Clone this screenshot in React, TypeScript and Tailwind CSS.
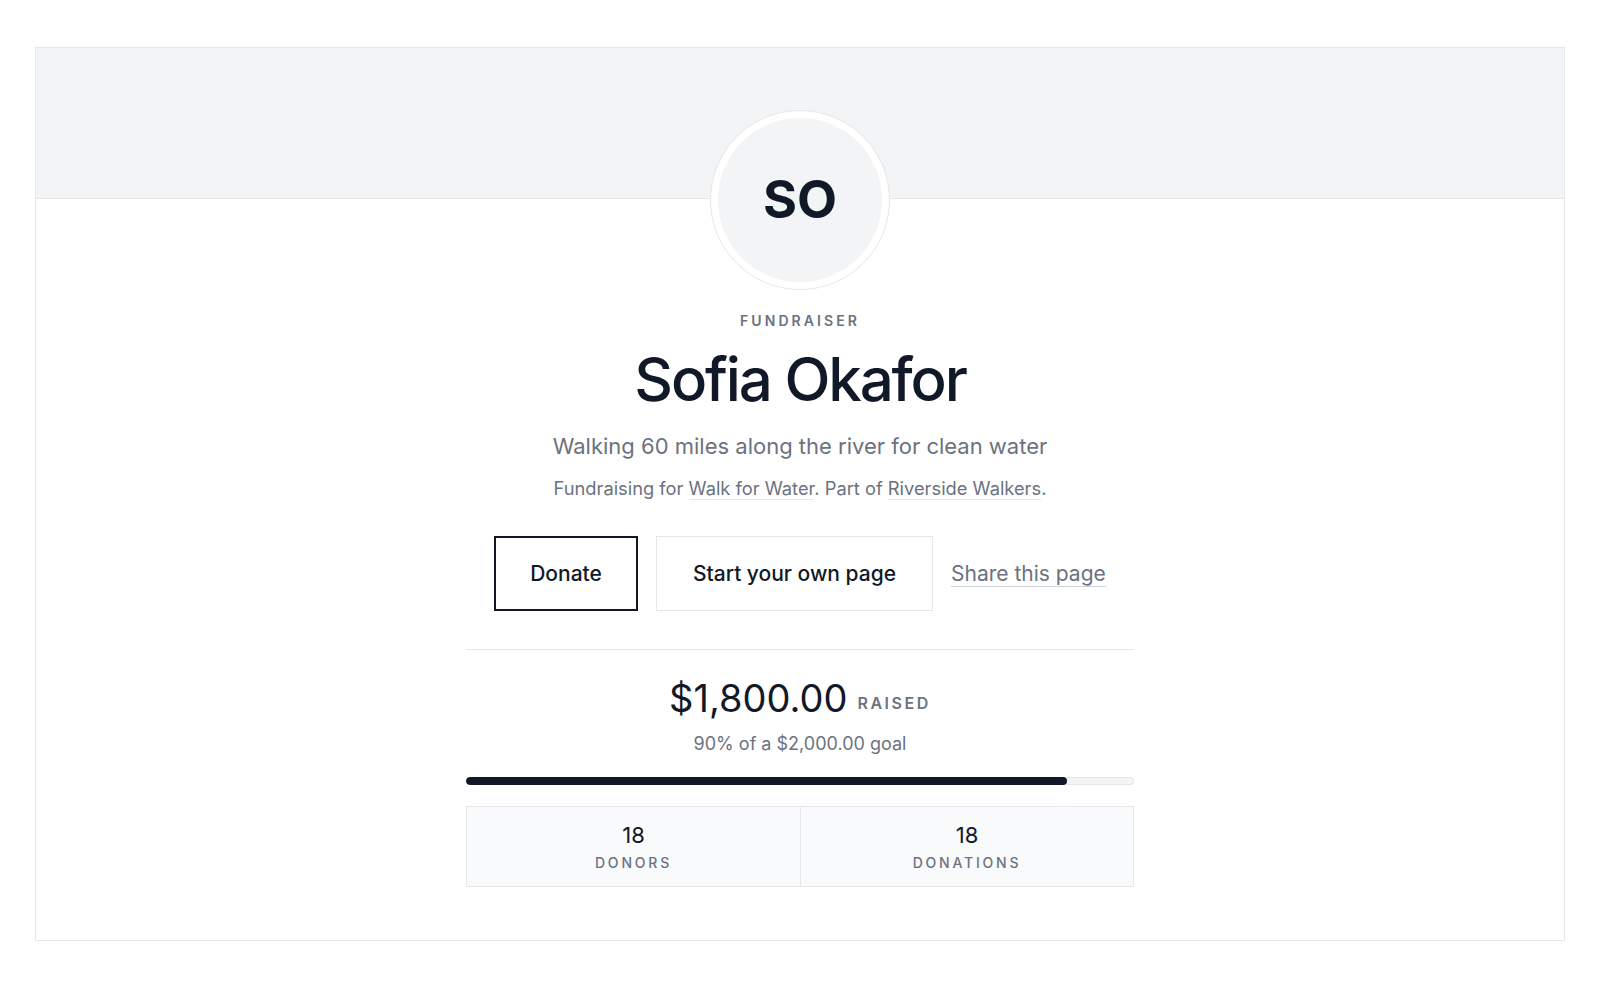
import React from "react";

function Stat({ value, label, divider }: { value: string; label: string; divider?: boolean }) {
  return (
    <div className={"flex flex-col items-center pt-[14px] pb-[13px] " + (divider ? "border-l border-[#e5e7eb]" : "")}>
      <div className="text-[22px] leading-[28px] text-[#111827]">{value}</div>
      <div className="mt-[4px] text-[14px] leading-[20px] font-medium tracking-[0.2em] text-[#6b7280]">{label}</div>
    </div>
  );
}

export default function App() {
  const pct = 90;
  return (
    <div className="min-h-screen bg-white pt-[47px] px-[35px] pb-[40px] font-[family-name:Inter,sans-serif] antialiased">
      <div className="border border-[#e5e7eb] bg-white pb-[53px]">
        <div className="h-[151px] bg-[#f3f4f6] border-b border-[#e5e7eb]" />
        <div className="flex flex-col items-center">
          <div className="relative -mt-[89px] w-[180px] h-[180px] rounded-full bg-white border border-[#e5e7eb] p-[7px]">
            <div className="w-full h-full rounded-full bg-[#f3f4f6] flex items-center justify-center text-[52px] leading-none font-bold text-[#111827]">
              SO
            </div>
          </div>
          <div className="mt-[21px] text-[14px] leading-[20px] font-semibold tracking-[0.22em] text-[#6b7280]">
            FUNDRAISER
          </div>
          <h1 className="mt-[18px] text-[60px] leading-[60px] font-medium tracking-[-0.036em] text-[#111827]">
            Sofia Okafor
          </h1>
          <p className="mt-[21px] text-[22px] leading-[32px] text-[#6b7280]">
            Walking 60 miles along the river for clean water
          </p>
          <p className="mt-[12px] text-[18.3px] leading-[28px] text-[#6b7280]">
            Fundraising for <span className="border-b border-[#e5e7eb]">Walk for Water</span>. Part of{" "}
            <span className="border-b border-[#e5e7eb]">Riverside Walkers</span>.
          </p>
          <div className="mt-[34px] flex items-center gap-[18px]">
            <button className="h-[75px] px-[34px] border-2 border-[#111827] bg-white text-[21px] font-medium text-[#111827]">
              Donate
            </button>
            <button className="h-[75px] px-[36px] border border-[#e5e7eb] bg-white text-[21px] font-medium text-[#111827]">
              Start your own page
            </button>
            <span className="text-[21px] leading-[26px] text-[#6b7280]">
              <span className="border-b border-[#d1d5db]">Share this page</span>
            </span>
          </div>
          <div className="w-[668px] flex flex-col items-center">
            <div className="mt-[38px] w-full h-px bg-[#e5e7eb]" />
            <div className="mt-[29px] flex items-baseline justify-center gap-[10px]">
              <span className="text-[38px] leading-[38px] text-[#111827]">$1,800.00</span>
              <span className="relative -top-[3px] text-[16px] leading-[24px] font-semibold tracking-[0.16em] text-[#6b7280]">RAISED</span>
            </div>
            <div className="mt-[12px] text-[18px] leading-[28px] text-[#6b7280]">90% of a $2,000.00 goal</div>
            <div className="mt-[19px] w-full h-[8px] rounded-full bg-[#f3f4f6] shadow-[inset_0_0_0_1px_#e5e7eb] overflow-hidden">
              <div className="h-full rounded-full bg-[#111827]" style={{ width: `${pct}%` }} />
            </div>
            <div className="mt-[21px] w-full grid grid-cols-2 border border-[#e5e7eb] bg-[#f9fafb]">
              <Stat value="18" label="DONORS" />
              <Stat value="18" label="DONATIONS" divider />
            </div>
          </div>
        </div>
      </div>
    </div>
  );
}
